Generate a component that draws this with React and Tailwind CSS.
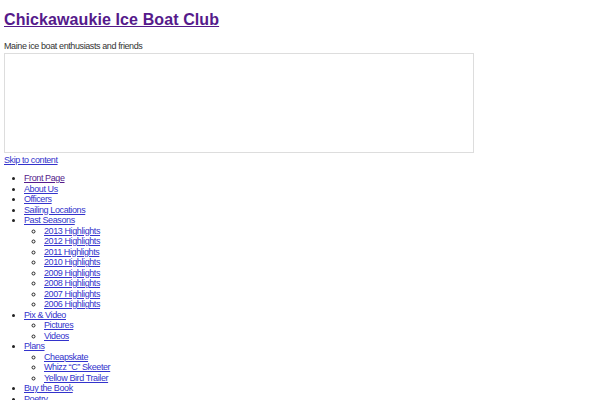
export default function App() {
  const link = "text-[#3333cc] underline";
  const sub = (items) => (
    <ul className="list-[circle] pl-[20px]">
      {items.map((t) => (
        <li key={t}><a href="#" className={link}>{t}</a></li>
      ))}
    </ul>
  );
  return (
    <div className="bg-white w-[600px] h-[400px] overflow-hidden text-[9px] leading-[10.5px] tracking-[-0.4px] text-[#222]" style={{ fontFamily: '"Liberation Sans", Arial, sans-serif' }}>
      <div className="px-[4px]">
        <h1 className="text-[16px] leading-[20px] font-bold tracking-[0.1px] pt-[10px] m-0">
          <a href="#" className="text-[#551a8b] underline">Chickawaukie Ice Boat Club</a>
        </h1>
        <p className="mt-[12px] leading-[9.5px] text-[#333]">Maine ice boat enthusiasts and friends</p>
        <div className="w-[470px] h-[100px] border border-[#dddddd] mt-[1px]"></div>
        <a href="#" className={link + " block mt-[2px]"}>Skip to content</a>
        <ul className="list-disc pl-[20px] mt-[8px]">
          <li><a href="#" className="text-[#551a8b] underline">Front Page</a></li>
          <li><a href="#" className={link}>About Us</a></li>
          <li><a href="#" className={link}>Officers</a></li>
          <li><a href="#" className={link}>Sailing Locations</a></li>
          <li><a href="#" className={link}>Past Seasons</a>
            {sub(["2013 Highlights", "2012 Highlights", "2011 Highlights", "2010 Highlights", "2009 Highlights", "2008 Highlights", "2007 Highlights", "2006 Highlights"])}
          </li>
          <li><a href="#" className={link}>Pix &amp; Video</a>
            {sub(["Pictures", "Videos"])}
          </li>
          <li><a href="#" className={link}>Plans</a>
            {sub(["Cheapskate", "Whizz “C” Skeeter", "Yellow Bird Trailer"])}
          </li>
          <li><a href="#" className={link}>Buy the Book</a></li>
          <li><a href="#" className={link}>Poetry</a></li>
        </ul>
      </div>
    </div>
  );
}
